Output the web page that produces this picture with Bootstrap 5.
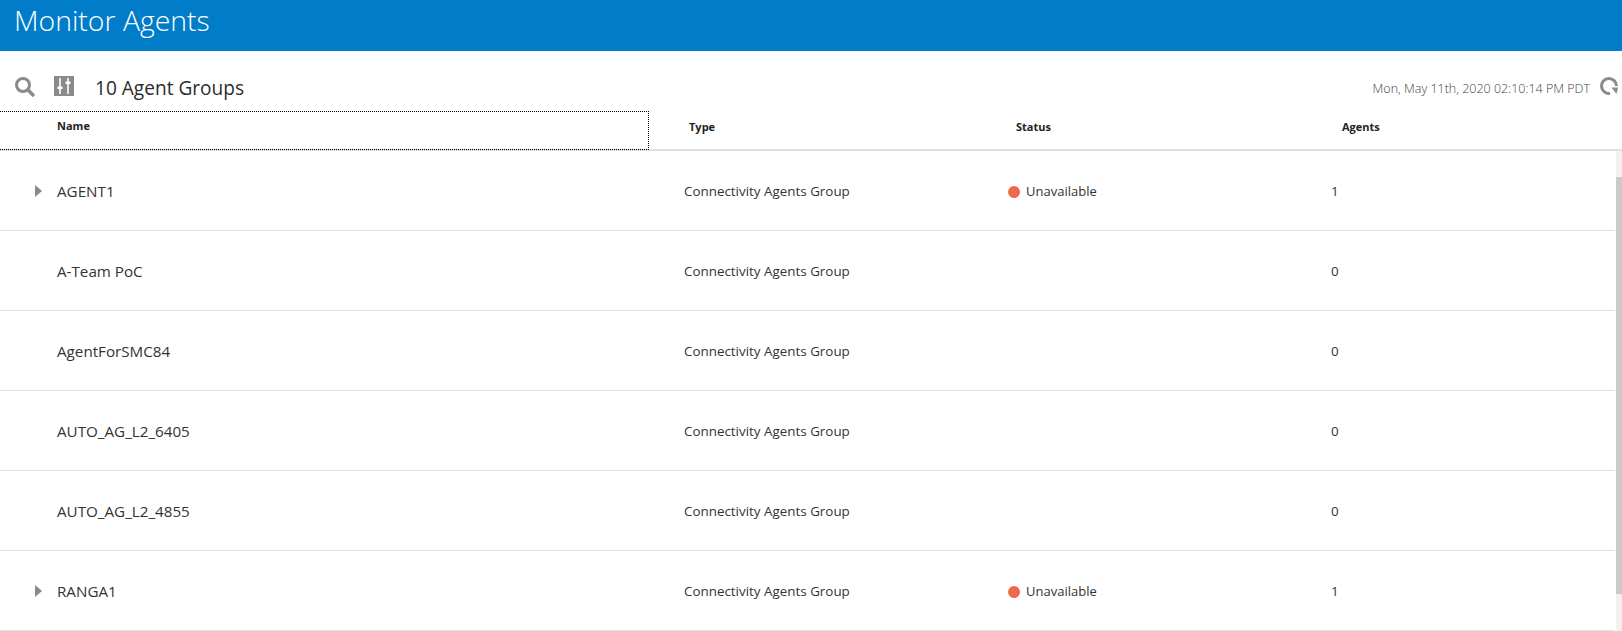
<!DOCTYPE html>
<html lang="en"><head><meta charset="utf-8"><title>Monitor Agents</title>
<link rel="stylesheet" href="https://cdn.jsdelivr.net/npm/bootstrap@5.3.0/dist/css/bootstrap.min.css">
<style>
html,body{height:631px;overflow:hidden;background:#fff}
body{font-family:"Open Sans","Liberation Sans",sans-serif;color:#333;font-size:13.4px}
.title-bar{height:51px;background:#007cc8;color:#fff;font-size:28.4px;font-weight:300;line-height:40px;padding-left:14px}
.tool-bar{height:60px;padding:12px 3px 0 14px}
.tool-count{font-size:19.1px;color:#2c2c2c;margin-left:21px;line-height:34px;padding-top:2px}
.tool-time{font-size:12.5px;font-weight:300;color:#444;margin-right:9px;padding-top:4px}
.ico-gap{margin-left:18px;margin-bottom:2px}
.ico-refresh{margin-bottom:2px}
.grid-head{height:40px;border-bottom:2px solid #e0e0e0;font-size:11px;font-weight:700;color:#222}
.head-name{flex:none;width:649px;height:39px;border:1px dotted #000;border-left:0;padding:6px 0 0 57px}
.head-cell{flex:none;width:324px;padding-top:8px}
.head-type{padding-left:40px}.head-status{padding-left:43px}.head-agents{padding-left:45px;width:318px}
.grid-body{width:1616px;height:480px}
.grid-row{height:80px;border-bottom:1px solid #e0e0e0;width:1615px}
.col-a{flex:none;width:648px;padding-left:35px;font-size:15.2px;padding-top:1px}
.col-b{flex:none;width:324px;padding-left:36px;padding-top:1px}
.col-n{width:319px;padding-left:35px}
.col-s{font-size:13px;padding-top:2px}
.twist{width:22px;flex:none}
.dot{width:12px;height:12px;border-radius:50%;background:#f0684c;margin-right:6px;flex:none}
.sb-track{width:6px;background:#f3f1f0;padding-top:26px}
.sb-thumb{height:417px;background:#cbcbcb}
</style></head><body>
<div class="title-bar">Monitor Agents</div>
<div class="tool-bar d-flex align-items-center">
 <svg width="22" height="22" viewBox="0 0 22 22" fill="none" stroke="#8a8a8a"><circle cx="9" cy="9" r="6.5" stroke-width="3"/><path d="M14 14l6 6" stroke-width="3.4"/></svg>
 <svg class="ico-gap" width="20" height="20" viewBox="0 0 20 20"><rect width="20" height="20" fill="#8a8a8a"/><path d="M6 2v16M14 2v16" stroke="#fff" stroke-width="1.6"/><rect x="3.5" y="10.5" width="5" height="2.6" fill="#fff"/><rect x="11.5" y="5.5" width="5" height="2.6" fill="#fff"/></svg>
 <span class="tool-count">10 Agent Groups</span>
 <span class="tool-time ms-auto">Mon, May 11th, 2020 02:10:14 PM PDT</span>
 <svg class="ico-refresh" width="20" height="20" viewBox="0 0 20 20" fill="none"><path d="M17.5 10A7.5 7.5 0 1 0 11 17.4" stroke="#8a8a8a" stroke-width="3"/><path d="M12.5 11.5H19L17.5 18z" fill="#8a8a8a"/></svg>
</div>
<div class="grid-head d-flex">
 <div class="head-name">Name</div><div class="head-cell head-type">Type</div><div class="head-cell head-status">Status</div><div class="head-cell head-agents">Agents</div>
</div>
<div class="d-flex">
 <div class="grid-body">
  <div class="grid-row d-flex align-items-center"><div class="col-a d-flex align-items-center"><svg class="twist" width="22" height="12" viewBox="0 0 22 12"><path d="M0 0l7 6-7 6z" fill="#8a8a8a"/></svg>AGENT1</div><div class="col-b">Connectivity Agents Group</div><div class="col-b col-s d-flex align-items-center"><span class="dot"></span>Unavailable</div><div class="col-b col-n">1</div></div>
  <div class="grid-row d-flex align-items-center"><div class="col-a"><span class="d-inline-block twist"></span>A-Team PoC</div><div class="col-b">Connectivity Agents Group</div><div class="col-b"></div><div class="col-b col-n">0</div></div>
  <div class="grid-row d-flex align-items-center"><div class="col-a"><span class="d-inline-block twist"></span>AgentForSMC84</div><div class="col-b">Connectivity Agents Group</div><div class="col-b"></div><div class="col-b col-n">0</div></div>
  <div class="grid-row d-flex align-items-center"><div class="col-a"><span class="d-inline-block twist"></span>AUTO_AG_L2_6405</div><div class="col-b">Connectivity Agents Group</div><div class="col-b"></div><div class="col-b col-n">0</div></div>
  <div class="grid-row d-flex align-items-center"><div class="col-a"><span class="d-inline-block twist"></span>AUTO_AG_L2_4855</div><div class="col-b">Connectivity Agents Group</div><div class="col-b"></div><div class="col-b col-n">0</div></div>
  <div class="grid-row d-flex align-items-center"><div class="col-a d-flex align-items-center"><svg class="twist" width="22" height="12" viewBox="0 0 22 12"><path d="M0 0l7 6-7 6z" fill="#8a8a8a"/></svg>RANGA1</div><div class="col-b">Connectivity Agents Group</div><div class="col-b col-s d-flex align-items-center"><span class="dot"></span>Unavailable</div><div class="col-b col-n">1</div></div>
 </div>
 <div class="sb-track"><div class="sb-thumb"></div></div>
</div>
<script src="https://cdn.jsdelivr.net/npm/bootstrap@5.3.0/dist/js/bootstrap.bundle.min.js"></script>
</body></html>
